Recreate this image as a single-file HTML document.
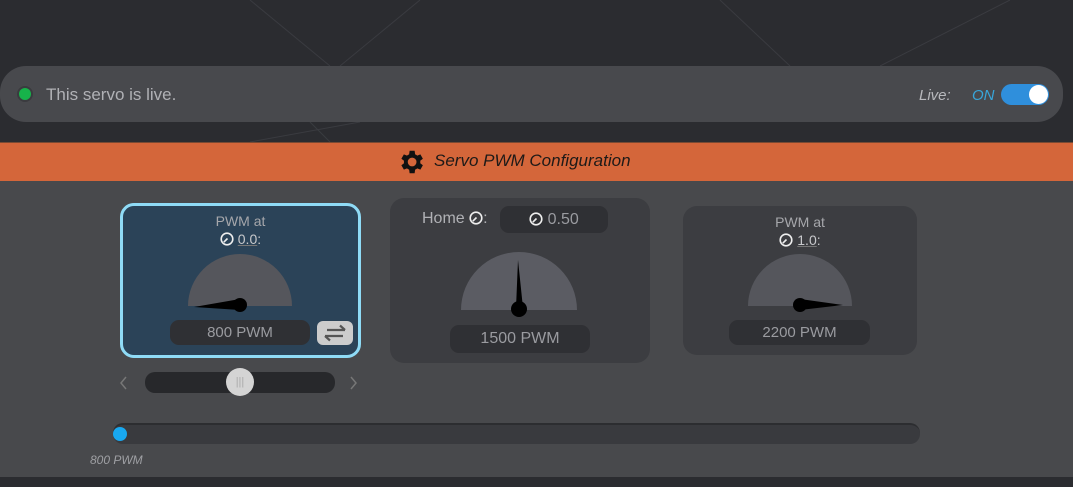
<!DOCTYPE html>
<html><head><meta charset="utf-8"><style>
*{margin:0;padding:0;box-sizing:border-box}
body{width:1073px;height:487px;background:#2b2c30;font-family:"Liberation Sans",sans-serif;position:relative;overflow:hidden;color:#a9aaae}
.abs{position:absolute}
.top{left:0;top:66px;width:1063px;height:56px;background:#48494d;border-radius:26px}
.hdr{left:0;top:142px;width:1073px;height:39px;background:#d4663a;border-top:1px solid #7a4a33}
.panel{left:0;top:181px;width:1073px;height:296px;background:#48494c}
.card{border-radius:14px;background:#3c3d41}
.pill{background:#2f3034;border-radius:9px;color:#9a9ba0;text-align:center;font-size:15px}
.t{font-size:14px;text-align:center;color:#a6a7ab}
.k{display:inline-block;width:14px;height:14px;vertical-align:-2px}
</style></head><body>
<svg width="0" height="0" style="position:absolute"><defs><symbol id="kn" viewBox="0 0 14 14"><circle cx="7" cy="7" r="5.8" fill="none" stroke="#eee" stroke-width="1.6"/><line x1="3.8" y1="10.2" x2="7.5" y2="6.5" stroke="#eee" stroke-width="1.6"/></symbol></defs></svg>
<svg class="abs" style="left:0;top:0" width="1073" height="487"><g stroke="#3a3b40" stroke-width="1" fill="none"><line x1="250" y1="0" x2="330" y2="66"/><line x1="1010" y1="0" x2="880" y2="66"/><line x1="720" y1="0" x2="790" y2="66"/><line x1="420" y1="0" x2="340" y2="66"/><line x1="360" y1="122" x2="250" y2="142"/><line x1="310" y1="122" x2="330" y2="142"/></g></svg>
<div class="abs top"></div>
<div class="abs" style="left:17px;top:86px;width:16px;height:16px;border-radius:50%;background:#3a3b3f"></div>
<div class="abs" style="left:19px;top:88px;width:12px;height:12px;border-radius:50%;background:#17b34a"></div>
<div class="abs" style="left:46px;top:85px;font-size:17px;color:#b0b1b5">This servo is live.</div>
<div class="abs" style="left:919px;top:87px;font-size:15px;font-style:italic;color:#b8b9bd">Live:</div>
<div class="abs" style="left:972px;top:87px;font-size:15px;font-style:italic;color:#38a6da">ON</div>
<div class="abs" style="left:1001px;top:84px;width:48px;height:21px;border-radius:11px;background:#2f8fdc"></div>
<div class="abs" style="left:1029px;top:85px;width:19px;height:19px;border-radius:50%;background:#fff"></div>
<div class="abs hdr"></div>
<svg class="abs" style="left:396px;top:147px" width="30" height="30" viewBox="0 0 24 24"><path fill="#111" d="M19.4 13a7.5 7.5 0 0 0 0-2l2.1-1.6-2-3.5-2.5 1a7 7 0 0 0-1.7-1L14.9 3h-4l-.4 2.9a7 7 0 0 0-1.7 1l-2.5-1-2 3.5L6.4 11a7.5 7.5 0 0 0 0 2l-2.1 1.6 2 3.5 2.5-1a7 7 0 0 0 1.7 1l.4 2.9h4l.4-2.9a7 7 0 0 0 1.7-1l2.5 1 2-3.5zM12.9 15.5a3.5 3.5 0 1 1 0-7 3.5 3.5 0 0 1 0 7z"/></svg>
<div class="abs" style="left:434px;top:151px;font-size:17px;font-style:italic;color:#1e1a18">Servo PWM Configuration</div>
<div class="abs panel"></div>
<!-- left card -->
<div class="abs card" style="left:120px;top:203px;width:241px;height:155px;background:#2b4358;border:3px solid #8fdbf6"></div>
<div class="abs t" style="left:120px;top:213px;width:241px">PWM at</div>
<div class="abs t" style="left:120px;top:231px;width:241px;color:#c8c9cc"><svg class="k"><use href="#kn"/></svg> <u style="text-decoration-color:#777">0.0</u>:</div>
<svg class="abs" style="left:180px;top:250px" width="120" height="70"><path d="M8 56A52 52 0 0 1 112 56Z" fill="#55565c"/><polygon points="14,57 60,49 60,60" fill="#000"/><circle cx="60" cy="55" r="7" fill="#000"/></svg>
<div class="abs pill" style="left:170px;top:320px;width:140px;height:25px;line-height:25px">800 PWM</div>
<div class="abs" style="left:317px;top:321px;width:36px;height:24px;border-radius:6px;background:#ccc"></div>
<svg class="abs" style="left:321px;top:323px" width="28" height="20"><g stroke="#555" stroke-width="2.2" fill="none"><path d="M6 7H24M19 2.5L24 7"/><path d="M22 13H4M9 17.5L4 13"/></g></svg>
<svg class="abs" style="left:118px;top:375px" width="10" height="16"><path d="M8 2L3 8L8 14" stroke="#777" stroke-width="1.5" fill="none"/></svg>
<svg class="abs" style="left:349px;top:375px" width="10" height="16"><path d="M2 2L7 8L2 14" stroke="#777" stroke-width="1.5" fill="none"/></svg>
<div class="abs" style="left:145px;top:372px;width:190px;height:21px;border-radius:10px;background:#27282b"></div>
<div class="abs" style="left:226px;top:368px;width:28px;height:28px;border-radius:50%;background:#d4d4d4;color:#aaa;font-size:11px;text-align:center;line-height:28px">|||</div>
<!-- middle -->
<div class="abs card" style="left:390px;top:198px;width:260px;height:165px"></div>
<div class="abs" style="left:422px;top:210px;font-size:16px;color:#b0b1b5">Home <svg class="k"><use href="#kn"/></svg>:</div>
<div class="abs pill" style="left:500px;top:206px;width:108px;height:27px;line-height:27px;font-size:16px"><svg class="k"><use href="#kn"/></svg> 0.50</div>
<svg class="abs" style="left:455px;top:248px" width="130" height="70"><path d="M6 62A58 58 0 0 1 122 62Z" fill="#5b5c63"/><polygon points="63,12 61,60 68,60" fill="#000"/><circle cx="64" cy="61" r="8" fill="#000"/></svg>
<div class="abs pill" style="left:450px;top:325px;width:140px;height:28px;line-height:28px;font-size:16px">1500 PWM</div>
<!-- right -->
<div class="abs card" style="left:683px;top:206px;width:234px;height:149px"></div>
<div class="abs t" style="left:683px;top:214px;width:234px">PWM at</div>
<div class="abs t" style="left:683px;top:232px;width:234px;color:#c8c9cc"><svg class="k"><use href="#kn"/></svg> <u style="text-decoration-color:#777">1.0</u>:</div>
<svg class="abs" style="left:740px;top:250px" width="120" height="70"><path d="M8 56A52 52 0 0 1 112 56Z" fill="#55565c"/><polygon points="60,49 103,55 60,60" fill="#000"/><circle cx="60" cy="55" r="7" fill="#000"/></svg>
<div class="abs pill" style="left:729px;top:320px;width:141px;height:25px;line-height:25px">2200 PWM</div>
<!-- bottom slider -->
<div class="abs" style="left:113px;top:423px;width:807px;height:21px;border-radius:10px;background:#393a3e;border-top:2px solid #2c2d30"></div>
<div class="abs" style="left:113px;top:427px;width:14px;height:14px;border-radius:50%;background:#18a8f0"></div>
<div class="abs" style="left:90px;top:453px;font-size:12px;font-style:italic;color:#9fa0a4">800 PWM</div>
</body></html>
